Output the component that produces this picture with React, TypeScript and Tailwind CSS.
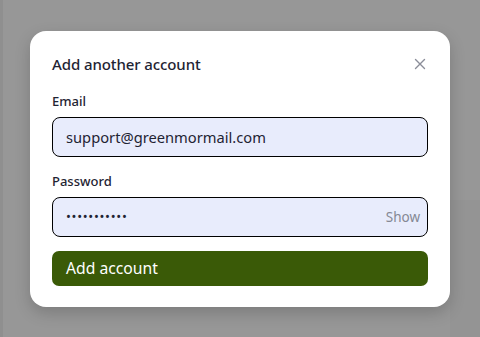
import React from "react";

export default function App() {
  return (
    <div
      className="relative w-[480px] h-[337px] overflow-hidden bg-[#979797]"
      style={{ fontFamily: '"Noto Sans", "Open Sans", sans-serif' }}
    >
      <div className="absolute left-0 top-0 h-full w-[3px] bg-[#8f8f8f]" />
      <div className="absolute right-0 top-[200px] h-[137px] w-[30px] bg-[#949494]" />
      <div className="absolute left-[30px] top-[31px] w-[420px] h-[276px] rounded-[16px] bg-white shadow-[0_6px_16px_rgba(0,0,0,0.18)] px-[22px] pt-[22px]">
        <div className="flex items-center justify-between h-[22px]">
          <h2 className="text-[15px] font-medium text-[#1f2433] tracking-[-0.1px]">Add another account</h2>
          <svg width="12" height="12" viewBox="0 0 12 12" className="mr-[2px]">
            <path d="M1.5 1.5 L10.5 10.5 M10.5 1.5 L1.5 10.5" stroke="#8a8d99" strokeWidth="1.4" strokeLinecap="round" />
          </svg>
        </div>
        <div className="mt-[17px] text-[13px] font-medium text-[#1f2433] leading-[18px]">Email</div>
        <div className="mt-[7px] h-[40px] rounded-[8px] border border-black bg-[#e8ecfc] flex items-center px-[13px]">
          <span className="text-[14.7px] text-[#1f2433]">support@greenmormail.com</span>
        </div>
        <div className="mt-[15px] text-[13px] font-medium text-[#1f2433] leading-[18px]">Password</div>
        <div className="mt-[7px] h-[40px] rounded-[8px] border border-black bg-[#e8ecfc] flex items-center justify-between pl-[13px] pr-[7px]">
          <span className="text-[13px] text-[#1f2433] tracking-[0.7px]">•••••••••••</span>
          <span className="text-[13.5px] text-[#858894]">Show</span>
        </div>
        <button className="mt-[14px] w-full h-[35px] rounded-[7px] bg-[#3a5a07] text-white text-[15.7px] text-left px-[14px]">
          Add account
        </button>
      </div>
    </div>
  );
}
